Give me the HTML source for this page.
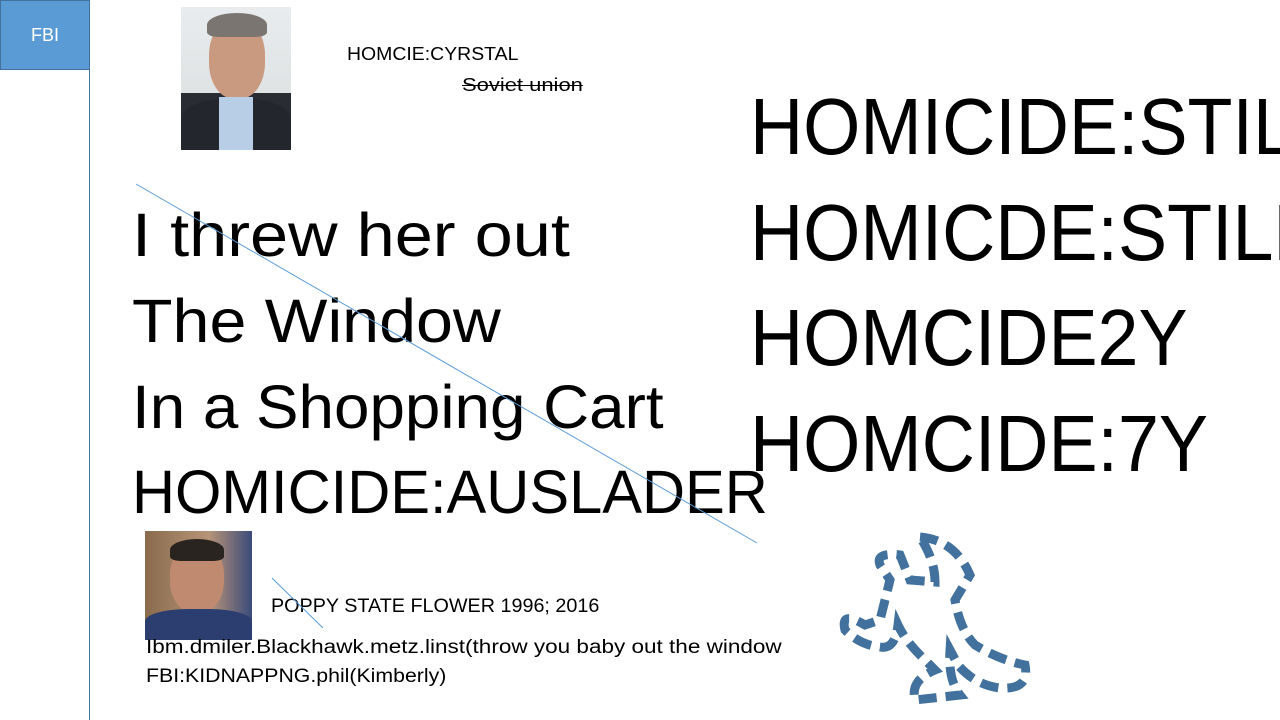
<!DOCTYPE html>
<html><head><style>
body{margin:0;width:1280px;height:720px;background:#fff;position:relative;overflow:hidden;font-family:"Liberation Sans",sans-serif;color:#000}
.t{position:absolute;white-space:nowrap;transform-origin:0 0;line-height:1}
</style></head><body>
<div style="position:absolute;left:0;top:0;width:88px;height:68px;background:#5B9BD5;border:1px solid #41719C;color:#fff;font-size:18px;text-align:center;line-height:68px">FBI</div>
<div style="position:absolute;left:89px;top:69px;width:1px;height:651px;background:#41719C"></div>

<div style="position:absolute;left:181px;top:7px;width:110px;height:143px;background:linear-gradient(#e8ecee,#dfe3e4 60%,#2a2c33 60%);overflow:hidden">
<div style="position:absolute;left:28px;top:12px;width:56px;height:80px;border-radius:45%;background:#c99a80"></div>
<div style="position:absolute;left:26px;top:6px;width:60px;height:24px;border-radius:50% 50% 20% 20%;background:#7a7570"></div>
<div style="position:absolute;left:0;top:92px;width:110px;height:51px;background:#23262d;border-radius:40% 40% 0 0"></div>
<div style="position:absolute;left:38px;top:90px;width:34px;height:53px;background:#b8cde6"></div>
</div>

<div style="position:absolute;left:145px;top:531px;width:107px;height:109px;background:linear-gradient(90deg,#8a6b4c,#b69478 60%,#3b4a7a);overflow:hidden">
<div style="position:absolute;left:25px;top:12px;width:54px;height:70px;border-radius:45%;background:#c08a70"></div>
<div style="position:absolute;left:25px;top:8px;width:54px;height:22px;border-radius:50% 50% 20% 20%;background:#2a2420"></div>
<div style="position:absolute;left:0;top:78px;width:107px;height:31px;background:#2c3e70;border-radius:40% 40% 0 0"></div>
</div>

<div class="t" style="left:347px;top:45px;font-size:18px;transform:scaleX(1.08)">HOMCIE:CYRSTAL</div>
<div class="t" style="left:462px;top:76px;font-size:18px;text-decoration:line-through;transform:scaleX(1.22)">Soviet union</div>

<div class="t" style="left:132px;top:205px;font-size:61px;transform:scaleX(1.123)">I threw her out</div>
<div class="t" style="left:132px;top:291px;font-size:61px;transform:scaleX(1.088)">The Window</div>
<div class="t" style="left:132px;top:377px;font-size:61px;transform:scaleX(1.045)">In a Shopping Cart</div>
<div class="t" style="left:132px;top:462px;font-size:61px;transform:scaleX(.977)">HOMICIDE:AUSLADER</div>

<div class="t" style="left:750px;top:74px;font-size:80px;line-height:105.5px;transform:scaleX(.92)">HOMICIDE:STILL<br>HOMICDE:STILL<br>HOMCIDE2Y<br>HOMCIDE:7Y</div>

<div class="t" style="left:271px;top:597px;font-size:19px;transform:scaleX(1.04)">POPPY STATE FLOWER 1996; 2016</div>
<div class="t" style="left:146px;top:638px;font-size:19px;transform:scaleX(1.185)">Ibm.dmiler.Blackhawk.metz.linst(throw you baby out the window</div>
<div class="t" style="left:146px;top:667px;font-size:19px;transform:scaleX(1.12)">FBI:KIDNAPPNG.phil(Kimberly)</div>

<svg style="position:absolute;left:0;top:0" width="1280" height="720">
<line x1="136" y1="184" x2="757" y2="543" stroke="#5B9BD5" stroke-width="1"/>
<line x1="272" y1="578" x2="323" y2="628" stroke="#5B9BD5" stroke-width="1"/>
<g fill="none" stroke="#41719C" stroke-width="9" stroke-dasharray="18 9">
<path d="M920 537 Q955 540 970 575 L955 600 Q960 630 975 645 Q1000 660 1025 665 Q1030 690 1000 688 Q975 685 958 665 L950 650 Q948 680 960 695 L915 700 Q910 680 935 670 L920 655 Q905 640 898 625 Q895 650 880 647 Q860 645 845 630 Q840 610 865 625 L880 620 Q885 600 890 580 L880 565 Q875 552 900 555 L910 580 L935 582 Q935 560 920 537 Z"/>
</g>
</svg>
</body></html>
